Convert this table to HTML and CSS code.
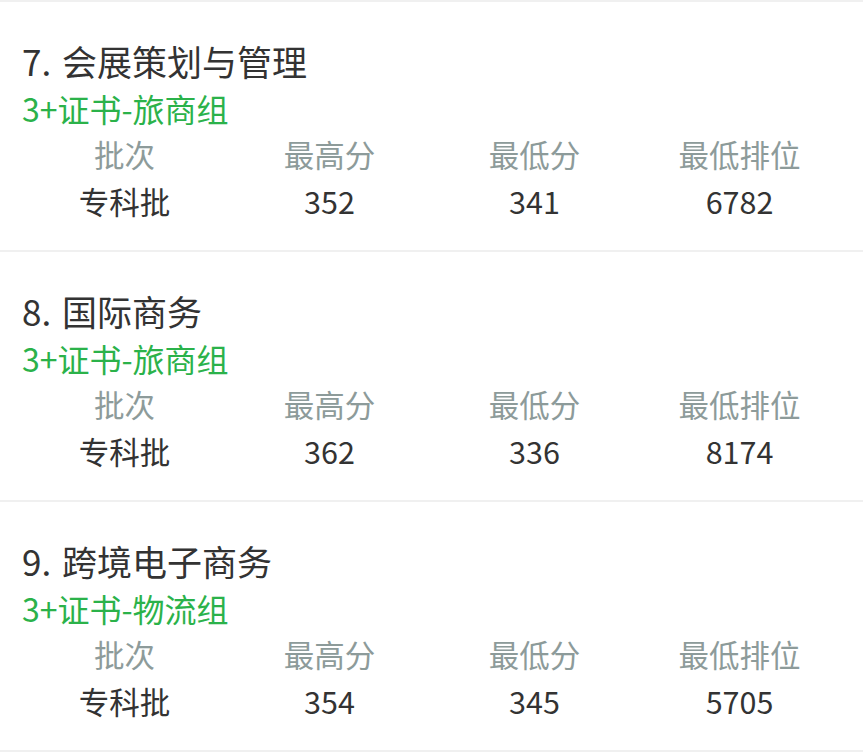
FILE: index.html
```html
<!DOCTYPE html>
<html lang="zh-CN">
<head>
<meta charset="utf-8">
<link rel="stylesheet" href="styles.css">
</head>
<body>
<div class="list">
  <div class="card">
    <div class="title">7. 会展策划与管理</div>
    <div class="group">3+证书-旅商组</div>
    <div class="grid head"><span>批次</span><span>最高分</span><span>最低分</span><span>最低排位</span></div>
    <div class="grid vals"><span>专科批</span><span>352</span><span>341</span><span>6782</span></div>
  </div>
  <div class="card">
    <div class="title">8. 国际商务</div>
    <div class="group">3+证书-旅商组</div>
    <div class="grid head"><span>批次</span><span>最高分</span><span>最低分</span><span>最低排位</span></div>
    <div class="grid vals"><span>专科批</span><span>362</span><span>336</span><span>8174</span></div>
  </div>
  <div class="card">
    <div class="title">9. 跨境电子商务</div>
    <div class="group">3+证书-物流组</div>
    <div class="grid head"><span>批次</span><span>最高分</span><span>最低分</span><span>最低排位</span></div>
    <div class="grid vals"><span>专科批</span><span>354</span><span>345</span><span>5705</span></div>
  </div>
  <div class="card end"></div>
</div>
</body>
</html>
```
FILE: styles.css
```css
html, body {
  margin: 0;
  padding: 0;
  background: #ffffff;
}
body {
  font-family: "Noto Sans CJK SC", "Noto Sans", sans-serif;
  color: #333333;
}
.card {
  border-top: 2px solid #f0f0f0;
  padding: 35px 21px 24px 22px;
  height: 250px;
  box-sizing: border-box;
}
.card.end {
  padding: 0;
  height: 10px;
}
.title {
  font-size: 35px;
  line-height: 48px;
  color: #333333;
  word-spacing: 3px;
}
.group {
  font-size: 32px;
  line-height: 46px;
  color: #2bb24a;
}
.grid {
  display: grid;
  grid-template-columns: repeat(4, 1fr);
  text-align: center;
  font-size: 30.5px;
  line-height: 47px;
}
.head {
  color: #8d9b9a;
}
.vals {
  color: #333333;
  line-height: 46px;
}
```
